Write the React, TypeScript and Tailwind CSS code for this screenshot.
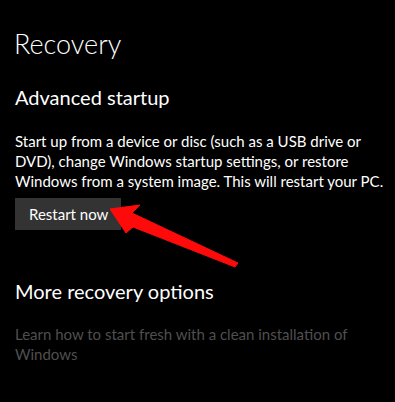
const RecoveryPage = () => {
  return (
    <div className="relative w-[395px] h-[402px] bg-black text-white overflow-hidden font-['Lato',sans-serif]">
      <div className="pl-[15px] pt-[26px]">
        <h1 className="text-[27px] leading-[36px] font-light -ml-[1px]">Recovery</h1>

        <h2 className="mt-[21px] text-[20px] leading-[28px]">Advanced startup</h2>
        <p className="mt-[20px] text-[15px] leading-[20px] whitespace-nowrap">
          Start up from a device or disc (such as a USB drive or
          <br />
          DVD), change Windows startup settings, or restore
          <br />
          Windows from a system image. This will restart your PC.
        </p>
        <button className="mt-[7px] w-[106px] h-[32px] bg-[#333333] text-[15px] text-white text-left pl-[14px]">
          Restart now
        </button>

        <h2 className="mt-[47px] text-[20px] leading-[28px]">More recovery options</h2>
        <p className="mt-[19px] text-[15px] leading-[20px] text-[#4f4f4f] whitespace-nowrap">
          Learn how to start fresh with a clean installation of
          <br />
          Windows
        </p>
      </div>

      {/* Red callout arrow pointing to the button */}
      <svg className="absolute left-0 top-0 pointer-events-none" width="395" height="402" viewBox="0 0 395 402">
        <polygon
          points="110,209 140,205 132,213 238,263 235,267 133,227 126,233"
          fill="#ff0a0a"
          stroke="#ff0a0a"
          strokeWidth="1"
          strokeLinejoin="round"
        />
      </svg>
    </div>
  );
};

export default function App() {
  return <RecoveryPage />;
}
